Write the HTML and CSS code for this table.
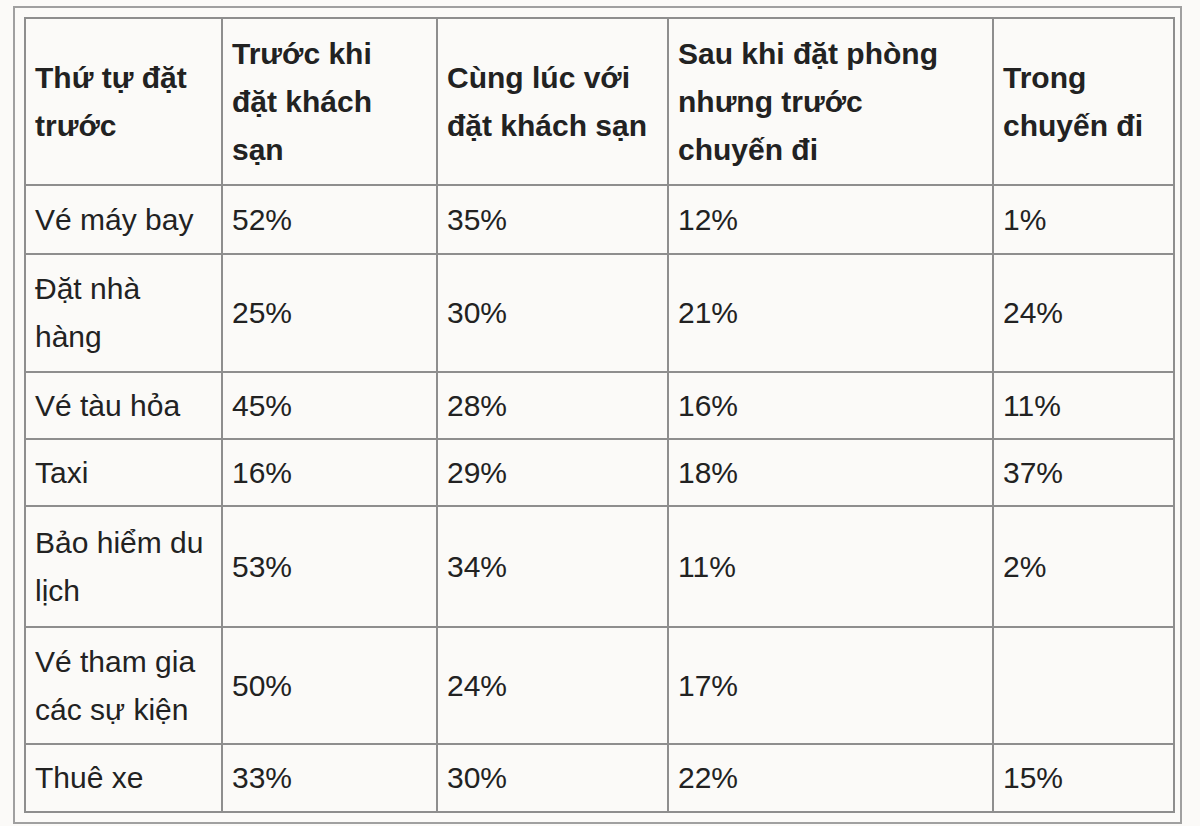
FILE: index.html
```html
<!DOCTYPE html>
<html lang="vi">
<head>
<meta charset="utf-8">
<link rel="stylesheet" href="styles.css">
</head>
<body>
<div class="frame">
<table class="booking">
<colgroup>
<col class="c1"><col class="c2"><col class="c3"><col class="c4"><col class="c5">
</colgroup>
<thead>
<tr class="h">
<th>Thứ tự đặt trước</th>
<th>Trước khi đặt khách sạn</th>
<th>Cùng lúc với đặt khách sạn</th>
<th class="narrow">Sau khi đặt phòng nhưng trước chuyến đi</th>
<th>Trong chuyến đi</th>
</tr>
</thead>
<tbody>
<tr class="r1"><td>Vé máy bay</td><td>52%</td><td>35%</td><td>12%</td><td>1%</td></tr>
<tr class="r2"><td>Đặt nhà hàng</td><td>25%</td><td>30%</td><td>21%</td><td>24%</td></tr>
<tr class="r3"><td>Vé tàu hỏa</td><td>45%</td><td>28%</td><td>16%</td><td>11%</td></tr>
<tr class="r4"><td>Taxi</td><td>16%</td><td>29%</td><td>18%</td><td>37%</td></tr>
<tr class="r5"><td>Bảo hiểm du lịch</td><td>53%</td><td>34%</td><td>11%</td><td>2%</td></tr>
<tr class="r6"><td>Vé tham gia các sự kiện</td><td>50%</td><td>24%</td><td>17%</td><td></td></tr>
<tr class="r7"><td>Thuê xe</td><td>33%</td><td>30%</td><td>22%</td><td>15%</td></tr>
</tbody>
</table>
</div>
</body>
</html>
```

FILE: styles.css
```css
html, body {
  background: #fbfaf8;
}
body {
  margin: 6px 0 0 13px;
  font-family: "Liberation Sans", Arial, sans-serif;
  color: #222;
}
.frame {
  width: 1147px;
  border: 2px solid #a0a0a0;
  padding: 9px;
}
.booking {
  width: 1149px;
  border-collapse: collapse;
  table-layout: fixed;
  font-size: 30px;
  line-height: 48px;
}
.c1 { width: 197px; }
.c2 { width: 215px; }
.c3 { width: 231px; }
.c4 { width: 325px; }
.c5 { width: 181px; }
.booking th,
.booking td {
  border: 2px solid #8e8e8e;
  padding: 0 12px 0 9px;
  text-align: left;
  vertical-align: middle;
}
.booking th {
  font-weight: bold;
}
.booking th.narrow {
  padding-right: 28px;
}
.h { height: 167px; }
.r1 { height: 69px; }
.r2 { height: 118px; }
.r3 { height: 67px; }
.r4 { height: 67px; }
.r5 { height: 121px; }
.r6 { height: 117px; }
.r7 { height: 68px; }
```
